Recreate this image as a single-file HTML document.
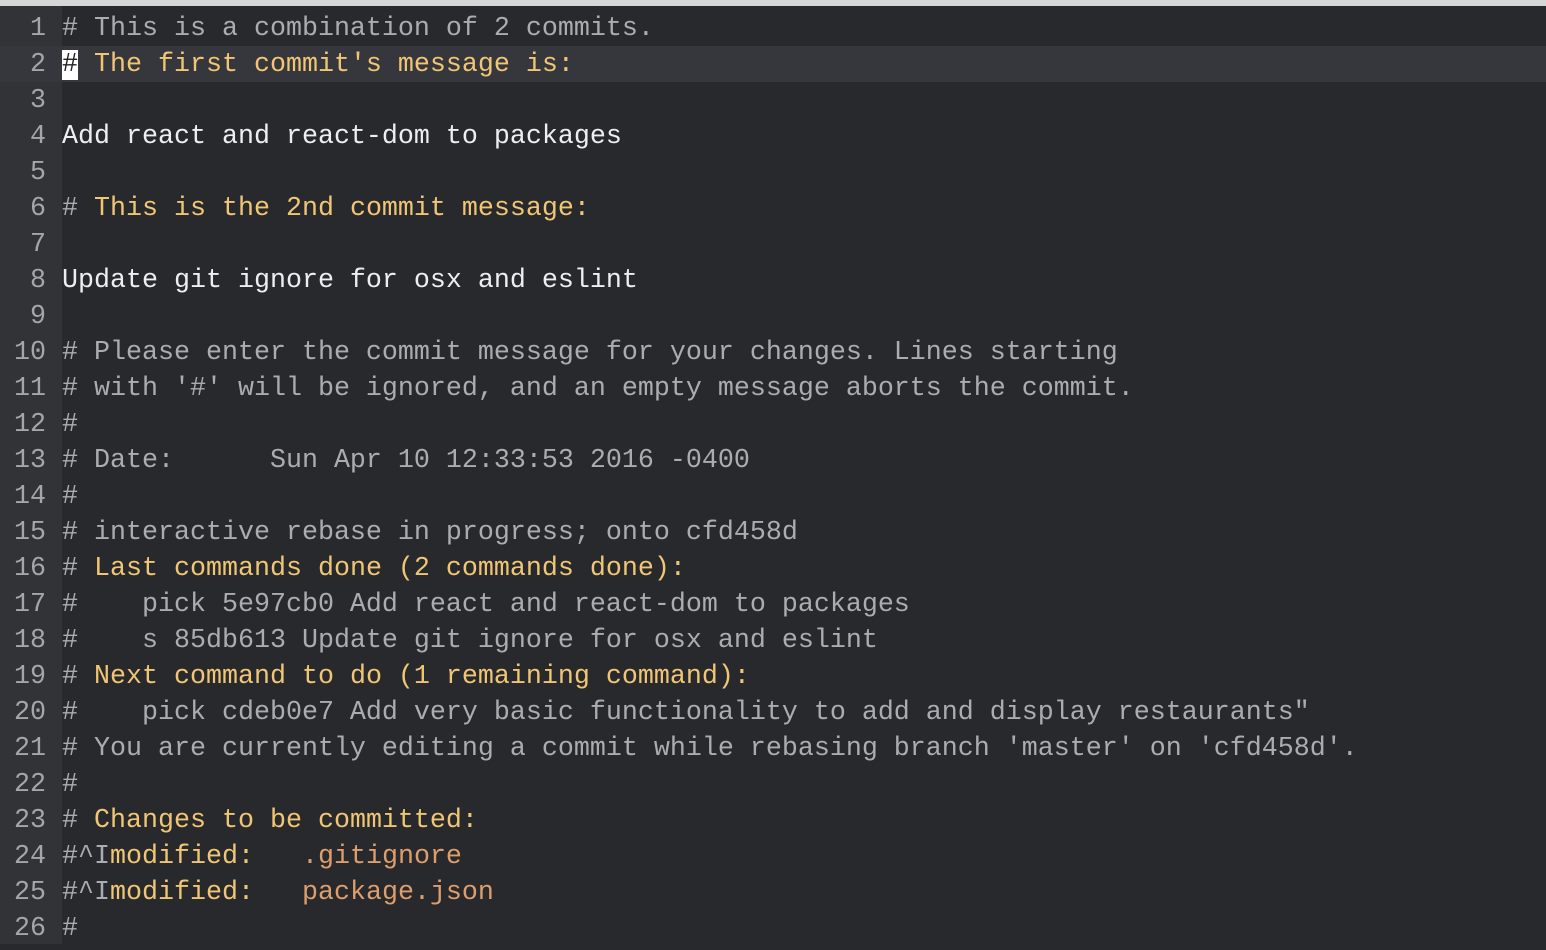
<!DOCTYPE html>
<html><head><meta charset="utf-8"><style>
html,body{margin:0;padding:0;width:1546px;height:950px;overflow:hidden;background:#28292d;}
.top{position:absolute;left:0;top:0;width:1546px;height:6px;background:#d6d6d6;}
.gut{position:absolute;left:0;top:6px;width:62px;height:938px;background:#323337;}
.ed{position:absolute;left:0;top:10px;width:1546px;font-family:"Liberation Mono",monospace;font-size:26.67px;}
.l{height:36px;line-height:36px;white-space:pre;position:relative;}
.t{position:relative;top:1px;}
.n{display:inline-block;width:46px;padding-right:16px;text-align:right;color:#a4a6aa;}
.cur{background:#36373c;}
.g{color:#a9adb2}.w{color:#eeeeee}.y{color:#f0c674}.o{color:#dd9e6c}
.c{background:#fff;color:#222;}
</style></head><body>
<div class="top"></div><div class="gut"></div>
<div class="ed">
<div class="l"><span class="t"><span class="n">1</span><span class="g"># This is a combination of 2 commits.</span></span></div>
<div class="l cur"><span class="t"><span class="n">2</span><span class="c">#</span><span class="y"> The first commit's message is:</span></span></div>
<div class="l"><span class="t"><span class="n">3</span></span></div>
<div class="l"><span class="t"><span class="n">4</span><span class="w">Add react and react-dom to packages</span></span></div>
<div class="l"><span class="t"><span class="n">5</span></span></div>
<div class="l"><span class="t"><span class="n">6</span><span class="g"># </span><span class="y">This is the 2nd commit message:</span></span></div>
<div class="l"><span class="t"><span class="n">7</span></span></div>
<div class="l"><span class="t"><span class="n">8</span><span class="w">Update git ignore for osx and eslint</span></span></div>
<div class="l"><span class="t"><span class="n">9</span></span></div>
<div class="l"><span class="t"><span class="n">10</span><span class="g"># Please enter the commit message for your changes. Lines starting</span></span></div>
<div class="l"><span class="t"><span class="n">11</span><span class="g"># with '#' will be ignored, and an empty message aborts the commit.</span></span></div>
<div class="l"><span class="t"><span class="n">12</span><span class="g">#</span></span></div>
<div class="l"><span class="t"><span class="n">13</span><span class="g"># Date:      Sun Apr 10 12:33:53 2016 -0400</span></span></div>
<div class="l"><span class="t"><span class="n">14</span><span class="g">#</span></span></div>
<div class="l"><span class="t"><span class="n">15</span><span class="g"># interactive rebase in progress; onto cfd458d</span></span></div>
<div class="l"><span class="t"><span class="n">16</span><span class="g"># </span><span class="y">Last commands done (2 commands done):</span></span></div>
<div class="l"><span class="t"><span class="n">17</span><span class="g">#    pick 5e97cb0 Add react and react-dom to packages</span></span></div>
<div class="l"><span class="t"><span class="n">18</span><span class="g">#    s 85db613 Update git ignore for osx and eslint</span></span></div>
<div class="l"><span class="t"><span class="n">19</span><span class="g"># </span><span class="y">Next command to do (1 remaining command):</span></span></div>
<div class="l"><span class="t"><span class="n">20</span><span class="g">#    pick cdeb0e7 Add very basic functionality to add and display restaurants"</span></span></div>
<div class="l"><span class="t"><span class="n">21</span><span class="g"># You are currently editing a commit while rebasing branch 'master' on 'cfd458d'.</span></span></div>
<div class="l"><span class="t"><span class="n">22</span><span class="g">#</span></span></div>
<div class="l"><span class="t"><span class="n">23</span><span class="g"># </span><span class="y">Changes to be committed:</span></span></div>
<div class="l"><span class="t"><span class="n">24</span><span class="g">#^I</span><span class="y">modified:</span>   <span class="o">.gitignore</span></span></div>
<div class="l"><span class="t"><span class="n">25</span><span class="g">#^I</span><span class="y">modified:</span>   <span class="o">package.json</span></span></div>
<div class="l"><span class="t"><span class="n">26</span><span class="g">#</span></span></div>
</div>
</body></html>
